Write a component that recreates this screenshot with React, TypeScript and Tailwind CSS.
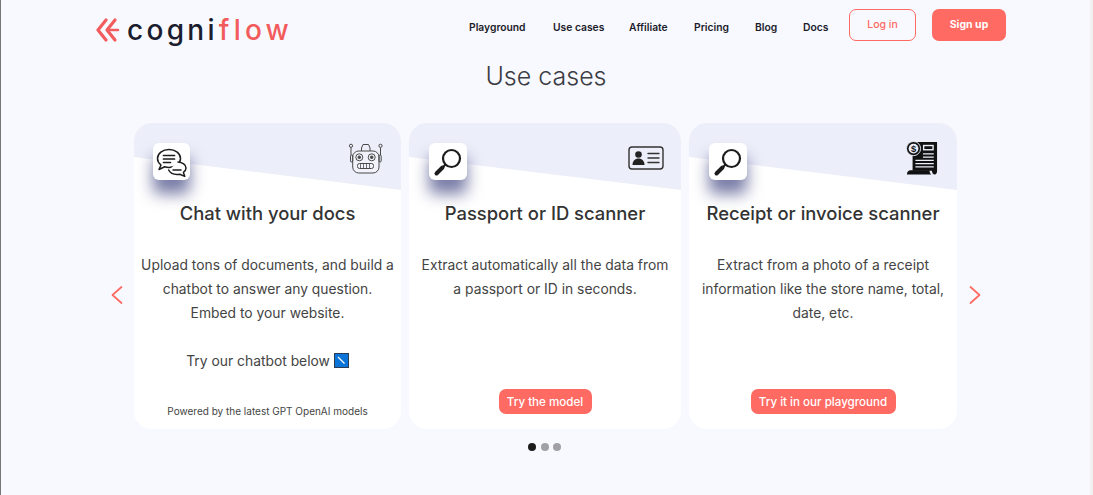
import type { ReactNode } from "react";

const font = { fontFamily: "Inter, 'Open Sans', sans-serif" };

function Chat() {
  return (
    <svg width="34" height="34" viewBox="0 -1.500 34 34" fill="none" stroke="#1c1c1c" strokeWidth="1.500" strokeLinecap="round" strokeLinejoin="round">
      <path d="M14 3c6.500 0 11.500 4 11.500 9s-5 9-11.500 9c-1.500 0-3-.2-4.300-.7L4 23l2-4.500C3.800 16.800 2.500 14.500 2.500 12c0-5 5-9 11.500-9z" fill="#fff" />
      <path d="M8.500 9h11M8.500 12.500h11M8.500 16h7" strokeWidth="1.700" />
      <path d="M23 15.500c4.500.3 8 2.800 8 6 0 1.800-1 3.300-2.600 4.400l1.400 4-5-2.200c-1 .2-1.800.3-2.800.3-3.800 0-7-1.800-8.300-4.500" fill="#fff" />
      <path d="M18 23.500h8" />
    </svg>
  );
}

function Lens() {
  return (
    <svg width="32" height="32" viewBox="0 0 32 32" fill="none" stroke="#1c1c1c" strokeLinecap="round">
      <circle cx="19.500" cy="12.500" r="8.500" strokeWidth="2.200" />
      <path d="M13 19 L4.500 27.500" strokeWidth="2.200" />
      <path d="M10.500 21.500 L4.500 27.500" strokeWidth="4" />
    </svg>
  );
}

function Robot() {
  return (
    <svg width="36" height="31" viewBox="0 0 36 31" fill="none" stroke="#4a4a4a" strokeWidth="1" strokeLinejoin="round" className="mt-px">
      <path d="M13.500 8V5L15 1.500h5.500L22 5v3" />
      <rect x="4.700" y="8" width="26.300" height="22" rx="6" fill="#f1f2fa" />
      <circle cx="11.300" cy="14.300" r="3.500" />
      <circle cx="11.300" cy="14.300" r="1.300" fill="#4a4a4a" />
      <circle cx="23.700" cy="14.300" r="3.500" />
      <circle cx="23.700" cy="14.300" r="1.300" fill="#4a4a4a" />
      <rect x="9.500" y="20.500" width="16" height="5" rx="2" />
      <path d="M12.500 20.500v5M15.500 20.500v5M18.500 20.500v5M21.500 20.500v5" strokeWidth=".8" />
      <rect x="2.500" y="12" width="2.200" height="7" rx="1.100" />
      <rect x="31" y="12" width="2.200" height="7" rx="1.100" />
      <path d="M3 12V4.500M32.500 12V4.500" />
      <circle cx="3" cy="2.800" r="1.600" />
      <circle cx="32.500" cy="2.800" r="1.600" />
    </svg>
  );
}

function IdCard() {
  return (
    <svg width="36" height="24" viewBox="0 0 36 24" fill="none" stroke="#333" strokeWidth="1.400" strokeLinecap="round">
      <rect x="1" y="1" width="34" height="22" rx="3" />
      <circle cx="10.500" cy="8.500" r="3.300" fill="#222" stroke="none" />
      <path d="M4.500 19c0-4 2.500-6.500 6-6.500s6 2.500 6 6.500z" fill="#222" stroke="none" />
      <path d="M20 7.500h11M20 12h11M20 16.500h11" />
    </svg>
  );
}

function Receipt() {
  return (
    <svg width="32" height="34" viewBox="0 0 34 36" fill="none" className="-mt-px">
      <path d="M7 1h26v31c0 2-1 3.500-2.500 3.500S27.500 34 27.500 31.500H7z" fill="#111" />
      <path d="M1 35.500c0-2.500 1.500-4.500 4-4.500h20c0 2 .5 3.500 2 4.500z" fill="#111" />
      <circle cx="8" cy="8" r="7.500" fill="#111" stroke="#eceef9" strokeWidth="1" />
      <circle cx="8" cy="8" r="5.200" fill="#eceef9" />
      <text x="8" y="11.500" textAnchor="middle" fontSize="10" fontWeight="700" fill="#111" fontFamily="Liberation Sans, sans-serif">$</text>
      <rect x="18" y="4" width="11.500" height="6" fill="#eceef9" />
      <rect x="19.500" y="5.500" width="8.500" height="3" fill="#111" />
      <path d="M18 13.500h11.500M18 17h11.500M10 20.500h19.500M10 24h19.500M10 27.500h19.500" stroke="#eceef9" strokeWidth="1.300" />
    </svg>
  );
}

function Chevron({ dir }: { dir: "left" | "right" }) {
  return (
    <svg width="12" height="18" viewBox="0 0 12 18" fill="none" stroke="#ff6a63" strokeWidth="1.700" strokeLinecap="round" strokeLinejoin="round">
      <path d={dir === "left" ? "M10.500 1 L1.500 9 L10.500 17" : "M1.500 1 L10.500 9 L1.500 17"} />
    </svg>
  );
}

function Card({
  width,
  title,
  tile,
  corner,
  children,
  footer,
  tileBox = "ml-5 w-[38px]",
  cornerPad = "pr-[17px]",
  footerBottom = "bottom-[15px]",
}: {
  width: string;
  title: string;
  tile: ReactNode;
  corner: ReactNode;
  children: ReactNode;
  footer: ReactNode;
  tileBox?: string;
  cornerPad?: string;
  footerBottom?: string;
}) {
  return (
    <div className={`${width} h-[306px] shrink-0 rounded-[18px] bg-white flex flex-col relative`}>
      <svg className="absolute top-0 left-0 w-full h-[67px] rounded-t-[18px]" viewBox="0 0 100 67" preserveAspectRatio="none">
        <polygon points="0,0 100,0 100,67 0,34" fill="#eceef9" />
      </svg>
      <div className={`relative h-[66px] pt-[19px] ${cornerPad} flex justify-between items-start`}>
        <div className={`${tileBox} mt-px h-[37px] bg-white rounded-[6px] flex items-center justify-center shadow-[0_14px_15px_rgba(50,55,120,0.65)]`}>
          {tile}
        </div>
        {corner}
      </div>
      <h3 className="relative mt-[12px] h-[24px] text-center text-[18.400px] leading-[24px] font-[450] text-[#333]">{title}</h3>
      <div className="relative mt-[28px] text-center text-[13.850px] leading-[24px] text-[#444]">{children}</div>
      <div className={`absolute ${footerBottom} left-0 right-0 flex justify-center`}>{footer}</div>
    </div>
  );
}

function Cta({ label, w }: { label: string; w: string }) {
  return (
    <div className={`${w} h-[25px] rounded-[7px] bg-[#ff6a63] text-white text-[11.600px] font-medium leading-[26px] text-center`}>{label}</div>
  );
}

export default function App() {
  const nav = ["Playground", "Use cases", "Affiliate", "Pricing", "Blog", "Docs"];
  const gaps = ["w-[84px]", "w-[76px]", "w-[65px]", "w-[61px]", "w-[48px]", "w-[46px]"];
  return (
    <div style={font} className="w-[1093px] h-[495px] overflow-hidden bg-[#f8f9fe] relative border-l border-[#777]">
      <header className="h-[50px] flex items-start pl-[95px]">
        <div className="mt-[14px] flex items-center w-[373px]">
          <svg width="28" height="28" viewBox="0 0 28 28" fill="none" stroke="#f25c5c" strokeWidth="3.200" strokeLinecap="round" strokeLinejoin="round" className="mr-[3px]">
            <path d="M10 4 L2 14 L10 24" />
            <path d="M19 4 L11 14 L19 24" />
            <path d="M14 14 H22" strokeWidth="2.500" />
          </svg>
          <span className="text-[28px] leading-[32px] tracking-[3.300px] text-[#1b1d2e] font-medium">cogni</span>
          <span className="text-[28px] leading-[32px] tracking-[4.200px] ml-[1px] text-[#f25c5c] font-medium">flow</span>
        </div>
        <nav className="flex mt-[20px] text-[10.300px] leading-[14px] font-semibold text-[#1c1c2a]">
          {nav.map((n, i) => (
            <span key={n} className={gaps[i]}>{n}</span>
          ))}
        </nav>
        <div className="mt-[9px] flex gap-[16px]">
          <div className="w-[67px] h-[32px] rounded-[7px] border border-[#ff6a63] text-[#ff6a63] text-[10.500px] font-medium flex items-center justify-center">Log in</div>
          <div className="w-[74px] h-[32px] rounded-[7px] bg-[#ff6a63] text-white text-[10.500px] font-bold flex items-center justify-center">Sign up</div>
        </div>
      </header>

      <h2 className="mt-[9px] h-[34px] mr-[2px] text-center text-[25px] leading-[34px] font-light text-[#3c3c44]">Use cases</h2>

      <div className="mt-[30px] flex items-center pl-[110px]">
        <div className="w-[23px] flex justify-start mt-[38px]"><Chevron dir="left" /></div>
        <div className="flex gap-2">
          <Card
            width="w-[267px]"
            title="Chat with your docs"
            tile={<Chat />}
            corner={<Robot />}
            tileBox="ml-[19px] w-[37px]"
            footerBottom="bottom-[11px]"
            footer={<span className="text-[10px] leading-[14px] text-[#444]">Powered by the latest GPT OpenAI models</span>}
          >
            <p>Upload tons of documents, and build a<br />chatbot to answer any question.<br />Embed to your website.</p>
            <p className="mt-[24px]">Try our chatbot below <svg className="inline-block align-[-2px]" width="15" height="15" viewBox="0 0 15 15"><rect x=".5" y=".5" width="14" height="14" fill="#0a74d8" stroke="#2b3c55" /><path d="M4 4 L10.500 10.500" stroke="#fff" strokeWidth="1.200" /></svg></p>
          </Card>
          <Card
            width="w-[272px]"
            title="Passport or ID scanner"
            tile={<Lens />}
            corner={<div className="pt-[4px]"><IdCard /></div>}
            footer={<Cta label="Try the model" w="w-[93px]" />}
          >
            <p>Extract automatically all the data from<br />a passport or ID in seconds.</p>
          </Card>
          <Card
            width="w-[268px]"
            title="Receipt or invoice scanner"
            tile={<Lens />}
            corner={<Receipt />}
            cornerPad="pr-[19px]"
            footer={<Cta label="Try it in our playground" w="w-[145px]" />}
          >
            <p>Extract from a photo of a receipt<br />information like the store name, total,<br />date, etc.</p>
          </Card>
        </div>
        <div className="ml-[12px] mt-[38px]"><Chevron dir="right" /></div>
      </div>

      <div className="mt-[14px] flex justify-center gap-[4.500px] mr-[5px]">
        <span className="w-2 h-2 rounded-full bg-[#1c1c1c]" />
        <span className="w-2 h-2 rounded-full bg-[#a0a0a6]" />
        <span className="w-2 h-2 rounded-full bg-[#a0a0a6]" />
      </div>

      <div className="absolute right-0 top-0 bottom-0 w-[3px] bg-[#f1f1f1]" />
    </div>
  );
}
